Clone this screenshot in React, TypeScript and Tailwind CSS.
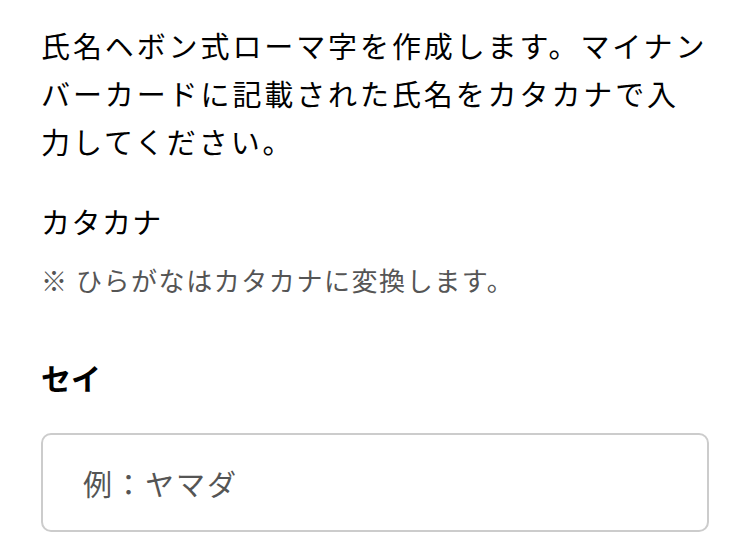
const font = { fontFamily: '"Noto Sans CJK JP", "Noto Sans", sans-serif' };

const App = () => {
  return (
    <div className="min-h-[552px] w-[750px] bg-white px-[41px] pt-[21px] text-black" style={font}>
      <p className="text-[29px] leading-[48px] tracking-[0.1em]">
        氏名ヘボン式ローマ字を作成します。マイナンバーカードに記載された氏名をカタカナで入力してください。
      </p>

      <div className="mt-[32px]">
        <p className="text-[29px] leading-[48px] tracking-[0.05em]">カタカナ</p>
        <p className="mt-[15px] text-[26px] leading-[40px] tracking-[0.06em] text-[#555]">
          ※ ひらがなはカタカナに変換します。
        </p>
      </div>

      <div className="mt-[55px]">
        <p className="text-[30px] font-bold leading-[44px]">セイ</p>
        <input
          type="text"
          placeholder="例：ヤマダ"
          className="mt-[34px] h-[99px] w-full rounded-[10px] border-2 border-[#ccc] bg-white px-[40px] text-[29px] tracking-[0.07em] outline-none placeholder:text-[#555]"
          style={font}
        />
      </div>
    </div>
  );
};

export default App;
